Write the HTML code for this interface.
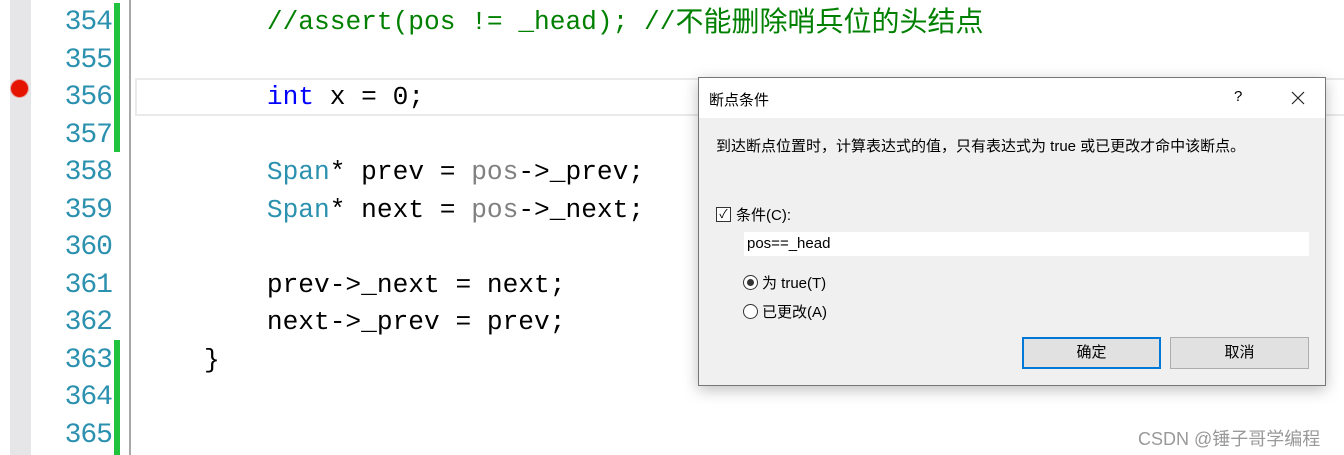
<!DOCTYPE html>
<html><head><meta charset="utf-8"><style>
body{margin:0;width:1344px;height:455px;background:#fff;position:relative;overflow:hidden;font-family:"Liberation Sans","Noto Sans CJK SC",sans-serif}
.a{position:absolute}
.ln{position:absolute;left:30px;width:82px;text-align:right;color:#2b91af;font:28px "Liberation Mono",monospace;line-height:37.5px;letter-spacing:-1px}
.code{position:absolute;white-space:pre;font:26.2px "Liberation Mono","Noto Sans CJK SC",monospace;line-height:37.5px;color:#000}
.cm{color:#008000}.kw{color:#0000ff}.ty{color:#2b91af}.gr{color:#808080}
.cj{font-size:28px;font-family:"Noto Sans CJK SC",sans-serif;line-height:1;vertical-align:top;display:inline-block;margin-top:2px}
.btn{position:absolute;top:337px;width:137px;height:30px;background:#e1e1e1;border:1px solid #adadad;font-size:15px;text-align:center;line-height:30px}
.d{font-size:15px}
</style></head><body>
<div class="a" style="left:10px;top:0;width:21px;height:455px;background:#e6e6e8"></div>
<div class="a" style="left:11px;top:80px;width:17px;height:17px;border-radius:50%;background:#e51400;box-shadow:0 0 0 1px #e8a0a0"></div>
<div class="a" style="left:114px;top:3px;width:6px;height:149px;background:#1fc33e"></div>
<div class="a" style="left:114px;top:340px;width:6px;height:115px;background:#1fc33e"></div>
<div class="a" style="left:129px;top:0;width:2px;height:455px;background:#a8a8a8"></div>
<div class="a" style="left:135px;top:78px;width:1209px;height:34px;border:2px solid #eaeaea"></div>
<div class="ln" style="top:4px">354<br>355<br>356<br>357<br>358<br>359<br>360<br>361<br>362<br>363<br>364<br>365</div>
<div class="code" style="left:204px;top:4px">    <span class="cm">//assert(pos != _head); //<span class="cj">不能删除哨兵位的头结点</span></span>

    <span class="kw">int</span> x = 0;

    <span class="ty">Span</span>* prev = <span class="gr">pos</span>-&gt;_prev;
    <span class="ty">Span</span>* next = <span class="gr">pos</span>-&gt;_next;

    prev-&gt;_next = next;
    next-&gt;_prev = prev;
}</div>
<div class="a" style="left:698px;top:77px;width:626px;height:307px;border:1px solid #777;background:#f0f0f0;box-shadow:0 4px 14px rgba(0,0,0,.25)">
 <div class="a" style="left:0;top:0;width:626px;height:40px;background:#fff"></div>
 <div class="a d" style="left:10px;top:11px">断点条件</div>
 <div class="a" style="left:535px;top:10px;font-size:15px">?</div>
 <svg class="a" style="left:592px;top:13px" width="14" height="14"><path d="M1 1L13 13M13 1L1 13" stroke="#222" stroke-width="1.2"/></svg>
 <div class="a d" style="left:17px;top:57px">到达断点位置时，计算表达式的值，只有表达式为 true 或已更改才命中该断点。</div>
 <div class="a" style="left:17px;top:129px;width:13px;height:13px;border:1px solid #333;background:#fff;font-size:12px;line-height:13px;text-align:center">✓</div>
 <div class="a d" style="left:37px;top:126px">条件(C):</div>
 <div class="a d" style="left:45px;top:154px;width:565px;height:24px;background:#fff;line-height:24px;padding-left:3px;box-sizing:border-box">pos==_head</div>
 <div class="a" style="left:44px;top:197px;width:13px;height:13px;border:1px solid #333;border-radius:50%;background:#fff"><div class="a" style="left:3px;top:3px;width:7px;height:7px;border-radius:50%;background:#333"></div></div>
 <div class="a d" style="left:63px;top:194px">为 true(T)</div>
 <div class="a" style="left:44px;top:226px;width:13px;height:13px;border:1px solid #333;border-radius:50%;background:#fff"></div>
 <div class="a d" style="left:63px;top:223px">已更改(A)</div>
</div>
<div class="btn" style="left:1022px;border:2px solid #0078d7;width:135px;height:28px;line-height:28px">确定</div>
<div class="btn" style="left:1170px">取消</div>
<div class="a" style="left:1138px;top:425px;font-size:18px;color:#999">CSDN @锤子哥学编程</div>
</body></html>
